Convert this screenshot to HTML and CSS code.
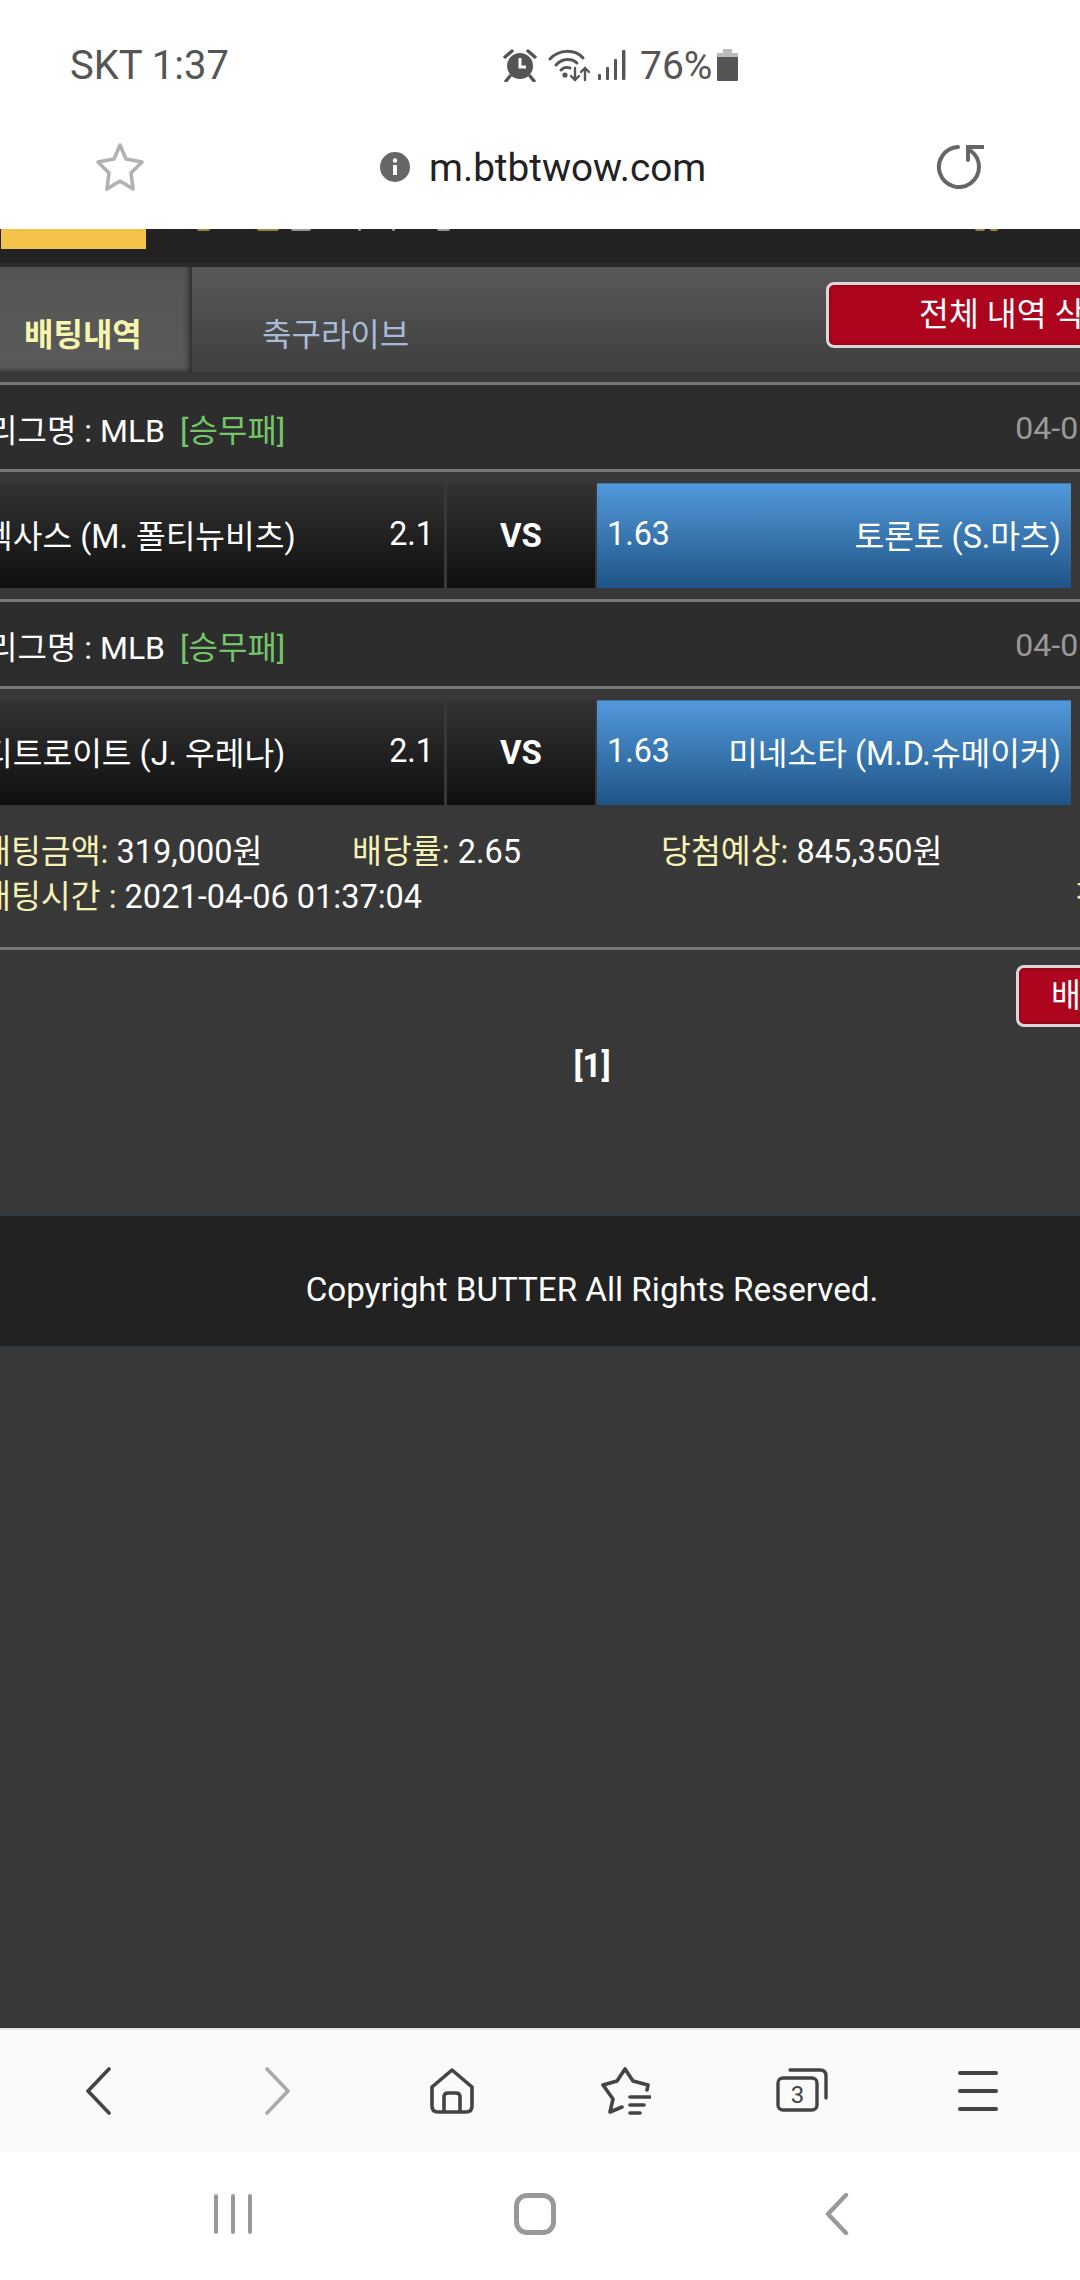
FILE: index.html
```html
<!DOCTYPE html>
<html lang="ko">
<head>
    <meta charset="UTF-8">
    <meta name="viewport" content="width=device-width, initial-scale=1.0">
    <title>m.btbtwow.com</title>
    <link rel="stylesheet" href="styles.css">
</head>
<body>
<div class="app">

    <!-- status bar -->
    <div class="status">
        <span class="carrier">SKT 1:37</span>
        <div class="status-right">
            <svg class="ic-alarm" width="34" height="34" viewBox="0 0 34 34">
                <circle cx="17" cy="18" r="13" fill="#555"/>
                <path d="M17 10V19H23" fill="none" stroke="#fff" stroke-width="3"/>
                <path d="M2 9L9 3M32 9L25 3M7 28L3 33M27 28L31 33" fill="none" stroke="#555" stroke-width="3.4" stroke-linecap="round"/>
            </svg>
            <svg class="ic-wifi" width="42" height="34" viewBox="0 0 42 34">
                <g fill="none" stroke="#555" stroke-width="3" stroke-linecap="round">
                    <path d="M2 11C11 1 27 1 35 10"/>
                    <path d="M8 17C14 10 24 10 29 15"/>
                    <path d="M13 22C16 19 20 19 22 20"/>
                    <path d="M27 20V32M23 28L27 32L31 28" stroke-width="2.4"/>
                    <path d="M37 32V20M33 24L37 20L41 24" stroke-width="2.4"/>
                </g>
                <circle cx="17" cy="27" r="2.6" fill="#555"/>
            </svg>
            <svg class="ic-signal" width="28" height="31" viewBox="0 0 28 31">
                <g fill="#555">
                    <rect x="0" y="25" width="3" height="6" rx="1"/>
                    <rect x="8" y="18" width="3" height="13" rx="1"/>
                    <rect x="16" y="10" width="3" height="21" rx="1"/>
                    <rect x="24" y="1" width="3.4" height="30" rx="1"/>
                </g>
            </svg>
            <span class="battery-text">76%</span>
            <svg class="ic-battery" width="21" height="32" viewBox="0 0 21 32">
                <path d="M6 0H15V4H21V8H0V4H6Z" fill="#bbb"/>
                <path d="M0 8H21V31Q21 32 20 32H1Q0 32 0 31Z" fill="#555"/>
            </svg>
        </div>
    </div>

    <!-- address bar -->
    <div class="urlbar">
        <svg class="ic-star" width="50" height="50" viewBox="0 0 50 50">
            <path d="M25 3L31 17L47 20L36 31L38 47L25 39L12 47L14 31L3 20L19 17Z" fill="none" stroke="#b2b2b2" stroke-width="3.6" stroke-linejoin="round"/>
        </svg>
        <svg class="ic-info" width="30" height="30" viewBox="0 0 30 30">
            <circle cx="15" cy="15" r="15" fill="#666"/>
            <circle cx="15" cy="8.5" r="2.2" fill="#fff"/>
            <rect x="13" y="13" width="4" height="10" fill="#fff"/>
        </svg>
        <span class="url">m.btbtwow.com</span>
        <svg class="ic-reload" width="48" height="48" viewBox="8 6 48 48">
            <path d="M30 12A20 20 0 1 0 43 16" fill="none" stroke="#666" stroke-width="4" stroke-linecap="round"/>
            <path d="M55 12H40V25" fill="none" stroke="#666" stroke-width="4" stroke-linecap="round"/>
        </svg>
    </div>

    <!-- web content, scrolled sideways as in the capture -->
    <div class="page">
        <div class="page-inner">

            <div class="top">
                <div class="logo"></div>
                <i class="crumb y w13"></i>
                <i class="crumb y w22 m47"></i>
                <i class="crumb w20 m12"></i>
                <i class="crumb w3 m47"></i>
                <i class="crumb w3 m31"></i>
                <i class="crumb w13 m42"></i>
                <i class="crumb y w10 m525"></i>
                <i class="crumb y w8 m5"></i>
            </div>

            <div class="tabs">
                <div class="tab active">배팅내역</div>
                <div class="tab">축구라이브</div>
                <button class="red-button delete-all" type="button">전체 내역 삭제</button>
            </div>

            <div class="league">
                <span>리그명 : MLB</span>
                <span class="type">[승무패]</span>
                <span class="date">04-06 02:05</span>
            </div>
            <div class="match">
                <div class="team home"><span>텍사스 (M. 폴티뉴비츠)</span><span>2.1</span></div>
                <div class="vs">VS</div>
                <div class="team away"><span>1.63</span><span>토론토 (S.마츠)</span></div>
            </div>

            <div class="league">
                <span>리그명 : MLB</span>
                <span class="type">[승무패]</span>
                <span class="date">04-06 02:10</span>
            </div>
            <div class="match">
                <div class="team home"><span>디트로이트 (J. 우레나)</span><span>2.1</span></div>
                <div class="vs">VS</div>
                <div class="team away"><span>1.63</span><span>미네소타 (M.D.슈메이커)</span></div>
            </div>

            <div class="info">
                <div><b>배팅금액:</b> 319,000원</div>
                <div><b>배당률:</b> 2.65</div>
                <div class="wide"><b>당첨예상:</b> 845,350원</div>
                <div class="time"><b>배팅시간 :</b> 2021-04-06 01:37:04</div>
                <div class="state"><b>진행중</b></div>
            </div>

            <div class="actions">
                <button class="red-button cancel" type="button">배팅취소</button>
            </div>
            <div class="pager">[1]</div>

            <div class="footer">Copyright BUTTER All Rights Reserved.</div>
        </div>
    </div>

    <!-- browser toolbar -->
    <div class="toolbar">
        <div class="tool">
            <svg width="26" height="48" viewBox="0 0 26 48"><path d="M24 2L3 24L24 46" fill="none" stroke="#444" stroke-width="3.6" stroke-linecap="round" stroke-linejoin="round"/></svg>
        </div>
        <div class="tool shift-fwd">
            <svg width="26" height="48" viewBox="0 0 26 48"><path d="M2 2L23 24L2 46" fill="none" stroke="#aaa" stroke-width="3.6" stroke-linecap="round" stroke-linejoin="round"/></svg>
        </div>
        <div class="tool shift-home">
            <svg width="46" height="46" viewBox="0 0 46 46">
                <path d="M23 2L3 19V38Q3 44 9 44H37Q43 44 43 38V19Z" fill="none" stroke="#444" stroke-width="3.6" stroke-linejoin="round"/>
                <path d="M15 44V29Q15 25 19 25H27Q31 25 31 29V44" fill="none" stroke="#444" stroke-width="3.6"/>
            </svg>
        </div>
        <div class="tool">
            <svg width="50" height="48" viewBox="0 0 50 48">
                <path d="M46 23L47 18L32 14L24 2L16 14L2 18L12 32L9 45L21 40" fill="none" stroke="#444" stroke-width="3.6" stroke-linecap="round" stroke-linejoin="round"/>
                <path d="M29 30H49M29 38H43M29 46H39" fill="none" stroke="#444" stroke-width="3.6" stroke-linecap="round"/>
            </svg>
        </div>
        <div class="tool">
            <svg width="52" height="46" viewBox="0 0 52 46">
                <rect x="2" y="10" width="39" height="32" rx="5" fill="none" stroke="#444" stroke-width="3.4"/>
                <path d="M14 2H44Q50 2 50 8V30" fill="none" stroke="#444" stroke-width="3.4" stroke-linecap="round"/>
                <text x="21.5" y="35" class="tab-count">3</text>
            </svg>
        </div>
        <div class="tool">
            <div class="menu"><i></i><i></i><i></i></div>
        </div>
    </div>

    <!-- system navigation -->
    <div class="nav">
        <div class="nav-item">
            <div class="bars"><i></i><i></i><i></i></div>
        </div>
        <div class="nav-item"><div class="home-key"></div></div>
        <div class="nav-item">
            <svg width="24" height="42" viewBox="0 0 24 42"><path d="M21 2L3 21L21 40" fill="none" stroke="#999" stroke-width="4.4" stroke-linecap="round" stroke-linejoin="round"/></svg>
        </div>
    </div>

</div>
</body>
</html>
```

FILE: styles.css
```css
* {
    box-sizing: border-box;
}
body {
    margin: 0;
    font-family: Roboto, "Noto Sans CJK KR", sans-serif;
    font-size: 33px;
    background: #fff;
    overflow: hidden;
}
.app {
    display: flex;
    flex-direction: column;
    width: 1080px;
    height: 2280px;
}

/* status bar */
.status {
    display: flex;
    align-items: center;
    height: 90px;
    padding: 39px 0 0 70px;
    color: #555;
    font-size: 40px;
    line-height: 52px;
}
.carrier {
    width: 433px;
    padding-top: 2px;
}
.status-right {
    display: flex;
    align-items: center;
}
.ic-alarm {
    margin-right: 11px;
}
.ic-wifi {
    margin-right: 8px;
}
.ic-signal {
    margin-right: 14px;
}
.battery-text {
    font-size: 39px;
    width: 77px;
    padding-top: 2px;
}

/* address bar */
.urlbar {
    display: flex;
    align-items: center;
    height: 139px;
    padding-top: 14px;
    color: #222;
    font-size: 38.7px;
}
.ic-star {
    margin-left: 95px;
    margin-right: 235px;
}
.ic-info {
    margin-right: 19px;
}
.url {
    width: 507px;
    padding-top: 2px;
}
.ic-reload {
    margin-top: -3px;
}

/* page */
.page {
    flex: 1;
    overflow: hidden;
    background: #383838;
    color: #fff;
}
.page-inner {
    width: 1264px;
    margin-left: -40px;
}
.top {
    display: flex;
    align-items: flex-start;
    height: 34px;
    padding-left: 41px;
    background: #222;
}
.logo {
    width: 145px;
    height: 20px;
    margin-right: 51px;
    background: #f3c349;
}
.crumb {
    display: block;
    height: 2px;
    background: #999;
    border-radius: 0 0 3px 3px;
}
.crumb.y {
    background: #a08540;
}
.w3 { width: 3px; }
.w8 { width: 8px; }
.w10 { width: 10px; }
.w13 { width: 13px; }
.w20 { width: 20px; }
.w22 { width: 22px; }
.m5 { margin-left: 5px; }
.m12 { margin-left: 12px; }
.m31 { margin-left: 31px; }
.m42 { margin-left: 42px; }
.m47 { margin-left: 47px; }
.m525 { margin-left: 525px; }

.tabs {
    display: flex;
    align-items: flex-start;
    height: 109px;
    border-top: 4px solid #2b2b2b;
    background: linear-gradient(#595959, #3f3f3f);
    background-clip: padding-box;
}
.tab {
    height: 105px;
    padding-top: 47px;
    line-height: 42px;
    font-size: 32px;
    color: #a9bad6;
}
.tab.active {
    width: 232px;
    margin-right: 70px;
    padding-left: 64px;
    background: linear-gradient(#555, #5a5a5a);
    box-shadow: inset -5px 0 6px -3px #2c2c2c, inset 0 -3px 4px -2px #333;
    border-right: 1px solid #333;
    color: #f6f7ae;
    font-weight: 700;
}
.red-button {
    border: 3px solid #dcd6d6;
    border-radius: 8px;
    background: #ad051e;
    box-shadow: inset 0 0 3px #5e0512;
    color: #fff;
    font-family: inherit;
    font-size: 32.5px;
    line-height: 40px;
    white-space: nowrap;
}
.delete-all {
    margin: 15px 20px 0 auto;
    width: 378px;
    height: 66px;
    padding: 0 0 0 90px;
    text-align: left;
}

.league {
    display: flex;
    align-items: center;
    height: 87px;
    padding-left: 28px;
    padding-top: 2px;
    background: #2d2d2d;
    border-top: 3px solid #777;
    margin-top: 10px;
    font-size: 32px;
}
.match + .league {
    margin-top: 0;
}
.league .type {
    margin-left: 15px;
    color: #74c567;
}
.league .date {
    margin-left: 730px;
    color: #999;
}
.match {
    display: flex;
    height: 130px;
    padding: 11px 0 14px;
    border-top: 3px solid #777;
}
.team {
    display: flex;
    justify-content: space-between;
    align-items: center;
    height: 105px;
    font-size: 32.3px;
}
.team span {
    position: relative;
    top: -2px;
}
.home {
    width: 484px;
    padding: 0 10px 0 23px;
    background: linear-gradient(#333, #0f0f0f);
}
.vs {
    width: 148px;
    height: 105px;
    margin: 0 2px 0 3px;
    background: linear-gradient(#333, #0f0f0f);
    font-weight: 700;
    text-align: center;
    line-height: 105px;
}
.away {
    width: 474px;
    padding: 0 10px;
    background: linear-gradient(#5299da, #1f5487);
    border-top: 1px solid #3f76ad;
}

.info {
    display: grid;
    grid-template-columns: 371px 309px 414px 1fr;
    align-content: start;
    height: 131px;
    padding: 14px 0 0 21px;
    font-size: 32.5px;
    line-height: 45px;
    white-space: nowrap;
}
.info b {
    font-weight: 400;
    color: #f6f1b4;
}
.info .time {
    grid-column: 1 / 4;
}
.actions {
    border-top: 3px solid #777;
    display: flex;
    justify-content: flex-end;
    padding: 15px 20px 0 0;
}
.cancel {
    width: 188px;
    height: 62px;
    text-align: left;
    padding: 0 0 0 32px;
}
.pager {
    height: 78px;
    line-height: 78px;
    text-align: center;
    font-weight: 700;
}
.footer {
    height: 134px;
    margin-top: 109px;
    border-top: 2px solid #2c3945;
    border-bottom: 2px solid #2c3945;
    background: #222;
    font-size: 33.2px;
    line-height: 148px;
    text-align: center;
}

/* bottom bars */
.toolbar {
    display: grid;
    grid-template-columns: repeat(6, 176px);
    align-items: center;
    height: 124px;
    padding-left: 10px;
    background: #fafafa;
    border-top: 2px solid #e6e6e6;
}
.tool {
    display: flex;
    justify-content: center;
    align-items: center;
}
.shift-fwd {
    padding-left: 8px;
}
.shift-home {
    padding-left: 4px;
}
.tab-count {
    font-family: Roboto, sans-serif;
    font-size: 24px;
    fill: #444;
    text-anchor: middle;
}
.menu {
    display: flex;
    flex-direction: column;
    gap: 14px;
    width: 40px;
}
.menu i {
    display: block;
    height: 4px;
    border-radius: 2px;
    background: #444;
}
.nav {
    display: grid;
    grid-template-columns: repeat(3, 302px);
    align-items: center;
    height: 128px;
    padding: 40px 0 44px 82px;
}
.nav-item {
    display: flex;
    justify-content: center;
    align-items: center;
}
.bars {
    display: flex;
    gap: 13px;
}
.bars i {
    display: block;
    width: 4px;
    height: 40px;
    border-radius: 2px;
    background: #999;
}
.home-key {
    width: 42px;
    height: 42px;
    border: 5px solid #999;
    border-radius: 13px;
}
```
